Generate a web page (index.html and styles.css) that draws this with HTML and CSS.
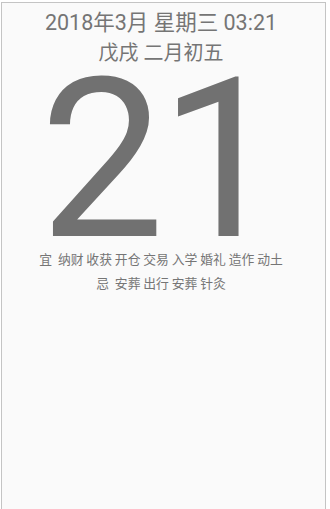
FILE: index.html
```html
<!DOCTYPE html>
<html lang="zh">
<head>
    <meta charset="UTF-8">
    <meta name="viewport" content="width=device-width, initial-scale=1.0">
    <title>日历</title>
    <link rel="stylesheet" href="styles.css">
</head>
<body>
    <div class="frame">
        <div class="date">2018年3月 星期三 03:21</div>
        <div class="lunar">戊戌 二月初五</div>
        <div class="day">21</div>
        <div class="almanac">
            <p><span class="tag">宜</span> 纳财 收获 开仓 交易 入学 婚礼 造作 动土</p>
            <p><span class="tag">忌</span> 安葬 出行 安葬 针灸</p>
        </div>
    </div>
</body>
</html>
```

FILE: styles.css
```css
html, body {
    margin: 0;
    padding: 0;
    background: #fff;
}

body {
    font-family: Roboto, "Noto Sans CJK SC", sans-serif;
    color: #757575;
}

.frame {
    box-sizing: border-box;
    width: 325px;
    height: 520px;
    margin: 2px 0 0 1px;
    padding-right: 5px;
    border: 1px solid #c4c4c4;
    border-bottom: none;
    background: #fafafa;
    text-align: center;
}

.date {
    font-size: 21.5px;
    line-height: 31px;
    margin-top: 4px;
}

.lunar {
    font-size: 20px;
    line-height: 31px;
}

.day {
    font-size: 222px;
    line-height: 200px;
    color: #717171;
    margin-top: -9px;
    padding-right: 3px;
    letter-spacing: -5px;
}

.almanac {
    font-family: "Noto Sans CJK SC", sans-serif;
    font-size: 12.8px;
    margin-top: -13px;
}

.almanac p {
    margin: 0;
    line-height: 24px;
}

.tag {
    margin-right: 3px;
}
```
